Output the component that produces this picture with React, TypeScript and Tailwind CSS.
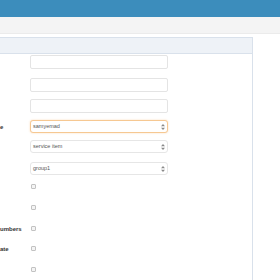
import React from 'react';

type Row =
  | { kind: 'text'; h: string; label?: string }
  | { kind: 'select'; h: string; label?: string; value: string; focus?: boolean }
  | { kind: 'check'; h: string; label?: string };

// visible part of the form (labels are cut at the left edge of the window)
const ROWS: Row[] = [
  { kind: 'text', h: 'h-[23px]' },
  { kind: 'text', h: 'h-[21px]' },
  { kind: 'text', h: 'h-[21px]' },
  { kind: 'select', h: 'h-[20px]', label: 'e', value: 'samyemad', focus: true },
  { kind: 'select', h: 'h-[22px]', value: 'service item' },
  { kind: 'select', h: 'h-[22px]', value: 'group1' },
  { kind: 'check', h: 'h-[21px]' },
  { kind: 'check', h: 'h-[21px]' },
  { kind: 'check', h: 'h-[20px]', label: 'umbers' },
  { kind: 'check', h: 'h-[21px]', label: 'ate' },
  { kind: 'check', h: 'h-[21px]' },
];

function Carets() {
  return (
    <svg width="4" height="6" viewBox="0 0 4 6" className="shrink-0">
      <path d="M2 0 L4 2.2 L0 2.2 Z" fill="#8a8a8a" />
      <path d="M2 6 L4 3.8 L0 3.8 Z" fill="#8a8a8a" />
    </svg>
  );
}

function Control({ row }: { row: Row }) {
  if (row.kind === 'text') {
    return <div className="h-[14px] w-[138px] rounded-[2px] border border-[#e4e4e4] bg-white" />;
  }
  if (row.kind === 'select') {
    return (
      <div
        className={`flex h-[13px] w-[138px] items-center justify-between rounded-[3px] border pl-[2px] pr-[2px] ${
          row.focus
            ? 'border-[#f6c892] bg-white shadow-[0_0_2px_rgba(245,170,90,0.45)]'
            : 'border-[#e6e6e6] bg-white'
        }`}
      >
        <span className="text-[5.5px] leading-none text-[#555]">{row.value}</span>
        <Carets />
      </div>
    );
  }
  return <div className="ml-[1px] h-[5px] w-[5px] rounded-[1px] border border-[#c2c2c2] bg-[#f4f4f4]" />;
}

export default function App() {
  return (
    <div className="h-[280px] w-[280px] overflow-hidden bg-white font-['Liberation_Sans',Arial,sans-serif]">
      {/* top bar */}
      <div className="h-[17px] bg-[#3c8dbc]" />
      {/* breadcrumb band */}
      <div className="h-[17px] border-b border-[#ebebeb] bg-[#f4f4f4]" />

      {/* panel */}
      <div className="mt-[3px] w-[253px] border-r border-t border-[#d9e1eb]">
        <div className="h-[16px] border-b border-[#d9e1eb] bg-[#eef2f7]" />
        <div className="flex flex-col pt-[1px]">
          {ROWS.map((row, i) => (
            <div key={i} className={`flex items-start ${row.h}`}>
              <div
                className={`flex w-[30px] shrink-0 items-center ${
                  row.kind === 'text' ? 'h-[14px]' : row.kind === 'select' ? 'h-[13px]' : 'h-[6px]'
                }`}
              >
                {row.label && (
                  <span className="text-[6px] font-bold leading-none whitespace-nowrap text-[#333]">{row.label}</span>
                )}
              </div>
              <Control row={row} />
            </div>
          ))}
        </div>
      </div>
    </div>
  );
}
